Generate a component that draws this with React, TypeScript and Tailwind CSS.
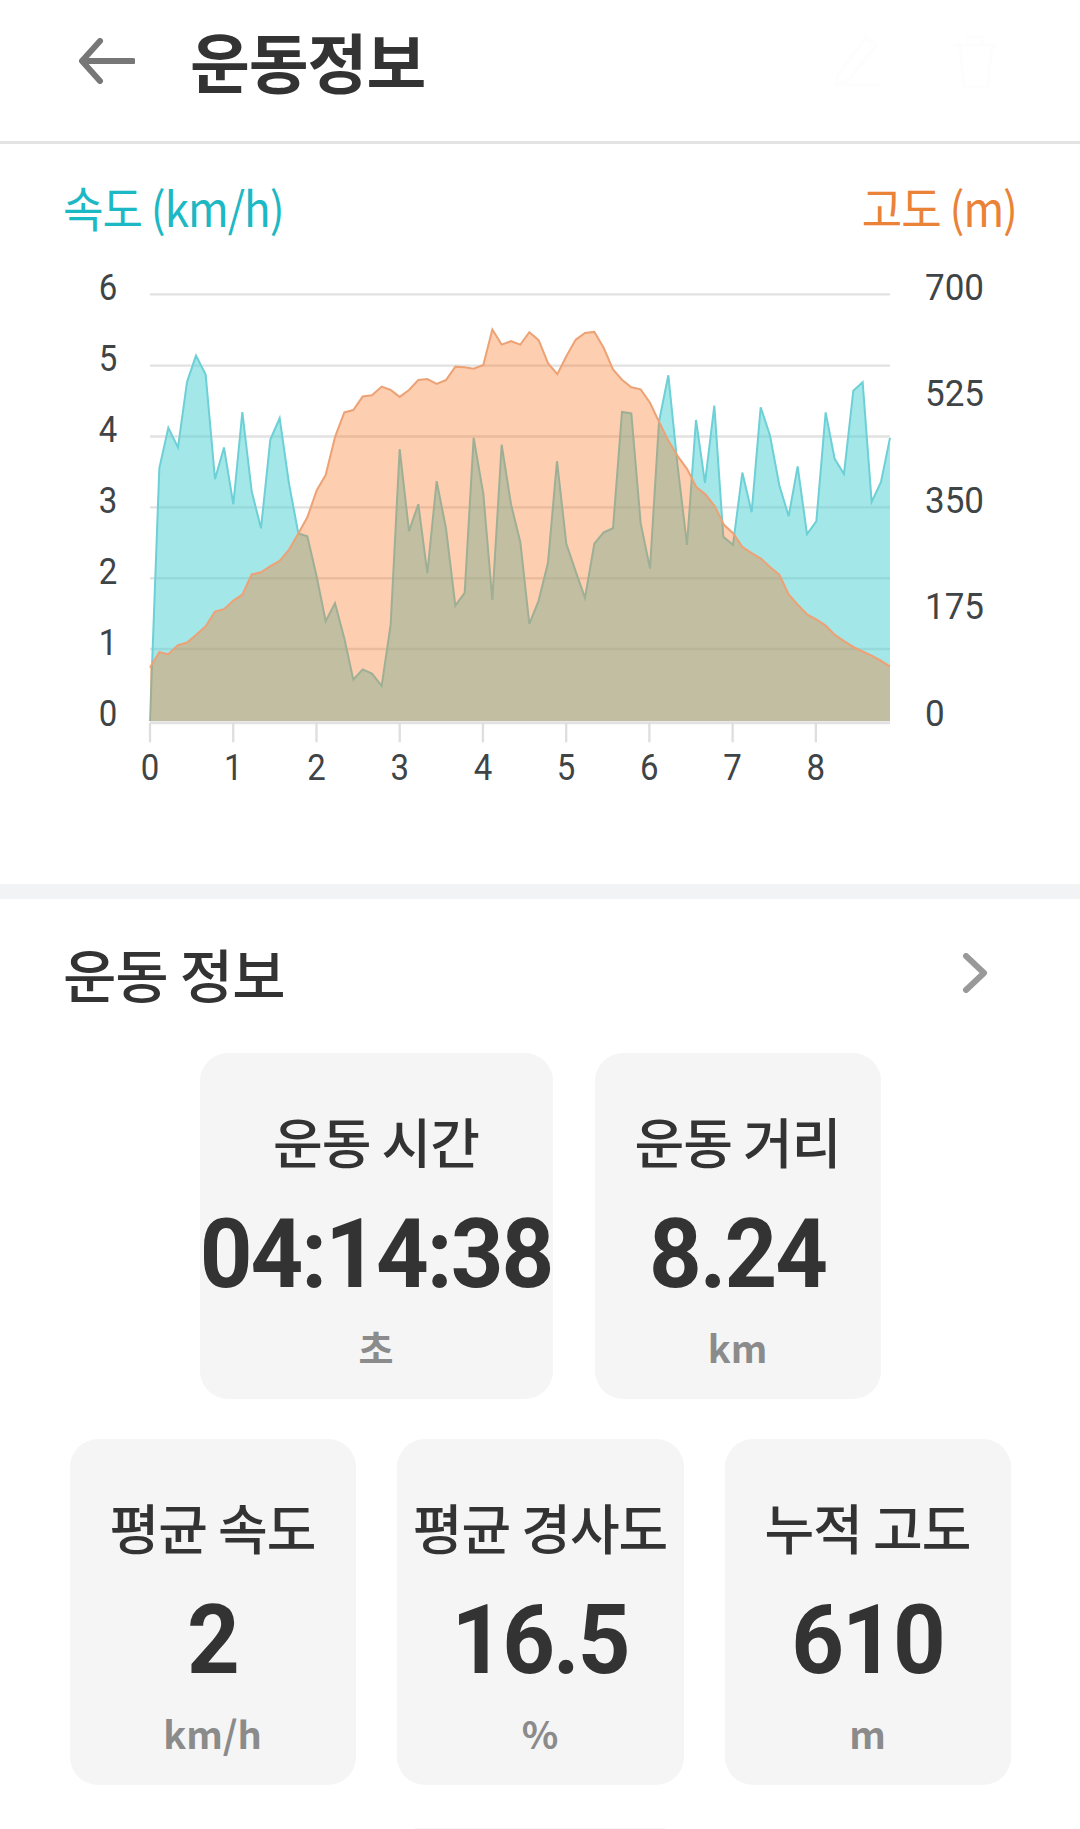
const speed = [
  [270, 1340], [298, 605], [325, 488], [354, 545], [381, 355], [408, 278], [437, 333], [465, 637], [492, 545], [520, 710],
  [547, 442], [575, 672], [603, 780], [631, 522], [659, 460], [687, 650], [715, 795], [742, 803], [770, 920], [797, 1050],
  [825, 998], [853, 1100], [880, 1220], [908, 1190], [936, 1202], [965, 1238], [992, 1060], [1019, 550], [1047, 788], [1075, 710],
  [1102, 910], [1130, 643], [1158, 780], [1186, 1005], [1214, 968], [1241, 517], [1270, 680], [1297, 988], [1325, 537], [1353, 710],
  [1381, 820], [1408, 1058], [1436, 990], [1464, 880], [1491, 585], [1519, 825], [1547, 905], [1575, 982], [1603, 825], [1631, 792],
  [1659, 780], [1686, 442], [1714, 446], [1742, 765], [1770, 897], [1797, 470], [1825, 335], [1853, 600], [1881, 828], [1908, 465],
  [1935, 648], [1963, 423], [1990, 805], [2019, 828], [2047, 618], [2075, 733], [2102, 428], [2130, 510], [2158, 655], [2186, 745],
  [2213, 600], [2241, 797], [2269, 760], [2297, 443], [2324, 578], [2352, 622], [2380, 380], [2408, 355], [2435, 703], [2463, 645],
  [2490, 517],
];

const elevation = [
  [270, 1185], [298, 1140], [325, 1146], [354, 1120], [381, 1112], [408, 1090], [437, 1065], [465, 1022], [492, 1015], [520, 990],
  [547, 973], [575, 914], [603, 908], [631, 890], [659, 875], [687, 842], [715, 795], [742, 748], [770, 670], [797, 625],
  [825, 515], [853, 443], [880, 436], [908, 397], [936, 393], [965, 368], [992, 378], [1019, 398], [1047, 378], [1075, 349],
  [1102, 346], [1130, 360], [1158, 349], [1186, 310], [1214, 312], [1241, 316], [1270, 305], [1297, 202], [1325, 246], [1353, 236],
  [1381, 246], [1408, 210], [1436, 233], [1464, 300], [1492, 332], [1519, 280], [1547, 232], [1575, 212], [1603, 209], [1631, 255],
  [1659, 318], [1686, 348], [1714, 370], [1742, 376], [1770, 415], [1797, 470], [1825, 525], [1853, 570], [1881, 607], [1909, 660],
  [1937, 682], [1965, 717], [1992, 770], [2020, 795], [2048, 835], [2075, 852], [2103, 868], [2131, 893], [2158, 915], [2186, 972],
  [2214, 1003], [2241, 1030], [2269, 1045], [2297, 1063], [2325, 1090], [2352, 1108], [2380, 1125], [2408, 1138], [2435, 1150], [2463, 1165],
  [2490, 1182],
];

const toPoints = (data: number[][]) => data.map((p) => p.join(",")).join(" ");

const leftLabels = ["6", "5", "4", "3", "2", "1", "0"];
const rightLabels = ["700", "525", "350", "175", "0"];

function Chart() {
  const gridY = [100, 307, 513, 719, 925, 1131];
  const ticks = [0, 1, 2, 3, 4, 5, 6, 7, 8];
  return (
    <svg width="1080" height="560" viewBox="0 0 1080 560" className="block">
      {/* points were read off a crop, hence the uneven scale */}
      <g transform="translate(60 16) scale(0.33333 0.344)">
        {gridY.map((y) => (
          <line key={y} x1="270" x2="2490" y1={y} y2={y} stroke="#e2e2e2" strokeWidth="7" />
        ))}
        <line x1="270" x2="2490" y1="1345" y2="1345" stroke="#e2e2e2" strokeWidth="9" />
        {ticks.map((t) => (
          <line key={t} x1={270 + t * 249.7} x2={270 + t * 249.7} y1="1345" y2="1402" stroke="#dedede" strokeWidth="7" />
        ))}
        <polygon points={`${toPoints(speed)} 2490,1340`} fill="rgba(71,207,211,0.5)" />
        <polyline points={toPoints(speed)} fill="none" stroke="#6dd0d6" strokeWidth="6" />
        <polygon points={`${toPoints(elevation)} 2490,1340 270,1340`} fill="rgba(249,116,30,0.35)" />
        <polyline points={toPoints(elevation)} fill="none" stroke="#eda276" strokeWidth="6" />
      </g>
      <g fontFamily="Roboto, sans-serif" fill="#3f4447">
        {leftLabels.map((l, i) => (
          <text key={l} fontSize="33" textAnchor="middle" transform={`translate(108 ${56 + i * 71}) scale(1 1.1)`}>{l}</text>
        ))}
        {rightLabels.map((l, i) => (
          <text key={l} fontSize="35" transform={`translate(925 ${56 + i * 106.4}) scale(1 1.05)`}>{l}</text>
        ))}
        {ticks.map((t) => (
          <text key={t} fontSize="33" textAnchor="middle" transform={`translate(${150 + t * 83.23} 536) scale(1 1.1)`}>{t}</text>
        ))}
      </g>
    </svg>
  );
}

function StatCard({ label, value, unit, className }: { label: string; value: string; unit: string; className: string }) {
  return (
    <div className={`flex h-[346px] flex-col items-center rounded-[28px] bg-[#f5f5f5] text-[#333] ${className}`}>
      <div className="mt-[53px] whitespace-nowrap text-[54px] leading-[70px] font-medium tracking-[-1px]">{label}</div>
      <div className="mt-[29px] scale-y-[1.04] whitespace-nowrap font-['Roboto',sans-serif] text-[92px] leading-[100px] font-bold tracking-[-2px]">{value}</div>
      <div className="mt-[17px] text-[38px] leading-[50px] font-semibold text-[#8b8b8b]">{unit}</div>
    </div>
  );
}

export default function App() {
  return (
    <div className="h-[1829px] w-[1080px] overflow-hidden bg-white font-['Noto_Sans_CJK_KR','Noto_Sans',sans-serif]">
      {/* Header */}
      <header className="flex h-[144px] items-center border-b-[3px] border-[#e4e4e4] pr-[84px] pb-[20px] pl-[79px]">
        <svg width="56" height="46" viewBox="0 0 56 46" fill="none" stroke="#777" strokeWidth="6" strokeLinecap="round" strokeLinejoin="round">
          <path d="M54 23H4" />
          <path d="M21 3 3 23l18 20" />
        </svg>
        <h1 className="ml-[55px] text-[65px] leading-none font-semibold tracking-[-1px] text-[#333]">운동정보</h1>
        {/* edit / delete icons, almost washed out in the picture */}
        <svg className="ml-auto" width="166" height="60" viewBox="0 0 166 60" fill="none" stroke="#fdfdfd" strokeWidth="3">
          <path d="M4 54h44M8 44 36 6l10 8-28 36-12 3z" />
          <path d="M124 14h42M130 14l4 42h24l4-42M138 14V6h14v8" />
        </svg>
      </header>

      {/* Chart */}
      <section className="h-[740px]">
        <div className="flex justify-between pt-[30px] pr-[63px] pb-[6px] pl-[63px] text-[44px] leading-[64px] tracking-[-1px]">
          <span className="scale-y-[1.08] text-[#1cb8c4]">속도 (km/h)</span>
          <span className="scale-y-[1.08] text-[#ea8237]">고도 (m)</span>
        </div>
        <Chart />
      </section>

      <div className="h-[15px] bg-[#f2f3f5]" />

      {/* Stats */}
      <section>
        <div className="flex h-[154px] items-center justify-between pr-[92px] pb-[6px] pl-[63px]">
          <h2 className="text-[58px] leading-none font-medium tracking-[-1px] text-[#333]">운동 정보</h2>
          <svg width="26" height="40" viewBox="0 0 26 40" fill="none" stroke="#999" strokeWidth="6" strokeLinecap="round" strokeLinejoin="round">
            <path d="m4 3 18 17L4 37" />
          </svg>
        </div>
        <div className="flex justify-center gap-[42px]">
          <StatCard label="운동 시간" value="04:14:38" unit="초" className="w-[353px]" />
          <StatCard label="운동 거리" value="8.24" unit="km" className="w-[286px]" />
        </div>
        <div className="mt-[40px] flex justify-center gap-[41px]">
          <StatCard label="평균 속도" value="2" unit="km/h" className="w-[286px]" />
          <StatCard label="평균 경사도" value="16.5" unit="%" className="w-[287px]" />
          <StatCard label="누적 고도" value="610" unit="m" className="w-[286px]" />
        </div>
        <div className="mx-auto mt-[43px] h-[2px] w-[250px] bg-[#f6f6f6]" />
      </section>
    </div>
  );
}
